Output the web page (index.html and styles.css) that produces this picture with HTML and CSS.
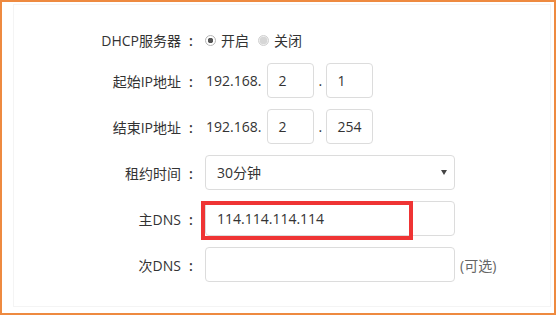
FILE: index.html
```html
<!DOCTYPE html>
<html lang="zh-CN">
<head>
    <meta charset="UTF-8">
    <meta name="viewport" content="width=device-width, initial-scale=1.0">
    <title>DHCP</title>
    <link rel="stylesheet" href="styles.css">
</head>
<body>

<section class="frame">
<div class="panel">

<form class="dhcp-form">

    <div class="row row-radio">
        <label class="label">DHCP服务器<span class="colon">:</span></label>
        <div class="field">
            <label class="radio"><input type="radio" name="dhcp" checked> 开启</label>
            <label class="radio"><input type="radio" name="dhcp" class="off"> 关闭</label>
        </div>
    </div>

    <div class="row">
        <label class="label">起始IP地址<span class="colon">:</span></label>
        <div class="field">
            <span class="prefix">192.168.</span>
            <input class="octet" type="text" value="2">
            <span class="dot">.</span>
            <input class="octet" type="text" value="1">
        </div>
    </div>

    <div class="row">
        <label class="label">结束IP地址<span class="colon">:</span></label>
        <div class="field">
            <span class="prefix">192.168.</span>
            <input class="octet" type="text" value="2">
            <span class="dot">.</span>
            <input class="octet" type="text" value="254">
        </div>
    </div>

    <div class="row">
        <label class="label">租约时间<span class="colon">:</span></label>
        <div class="field">
            <div class="select-wrap">
                <select class="select">
                    <option>30分钟</option>
                    <option>1小时</option>
                    <option>2小时</option>
                </select>
            </div>
        </div>
    </div>

    <div class="row">
        <label class="label">主DNS<span class="colon">:</span></label>
        <div class="field">
            <div class="highlight-wrap">
                <input class="text-input" type="text" value="114.114.114.114">
                <div class="highlight"></div>
            </div>
        </div>
    </div>

    <div class="row">
        <label class="label">次DNS<span class="colon">:</span></label>
        <div class="field">
            <input class="text-input" type="text" value="">
            <span class="hint">(可选)</span>
        </div>
    </div>

</form>

</div>
</section>

</body>
</html>
```

FILE: styles.css
```css
*{
    box-sizing: border-box;
}

html, body{
    margin: 0;
    padding: 0;
    background: #fff;
}

body{
    font-family: "Open Sans", "Noto Sans CJK SC", sans-serif;
    font-size: 14px;
    color: #333;
}

.frame{
    width: 556px;
    height: 315px;
    border: 2px solid #ee8a40;
    padding: 2px 3px 6px 11px;
}

.panel{
    height: 100%;
    border: 1px solid #f4f4f4;
}

.dhcp-form{
    display: flex;
    flex-direction: column;
    padding-top: 17px;
    padding-left: 76px;
}

.row{
    display: flex;
    align-items: center;
    height: 35px;
    margin-bottom: 11px;
}

.row-radio{
    height: 36px;
    margin-bottom: 5px;
}

.label{
    width: 111px;
    text-align: right;
    margin-right: 4px;
    white-space: nowrap;
}

/* centred colon in a wide cell */
.colon{
    display: inline-block;
    width: 20px;
    text-align: center;
    font-weight: 600;
}

.field{
    display: flex;
    align-items: center;
    height: 100%;
}

/* radios */
.radio{
    display: flex;
    align-items: center;
    margin-right: 9px;
}

.radio input{
    appearance: none;
    -webkit-appearance: none;
    width: 11px;
    height: 11px;
    margin: 0 5px 0 0;
    border-radius: 50%;
    border: 1px solid #b5b5b5;
    background: radial-gradient(circle, #555 0, #555 2.5px, #fff 3px);
}

.radio input.off{
    border-color: #d0d0d0;
    background: radial-gradient(circle, #d6d6d6 0, #d6d6d6 3.5px, #ededed 4px);
}

/* ip octets */
.prefix{
    margin-left: 1px;
    margin-right: 6px;
}

.octet{
    width: 47px;
    height: 35px;
    border: 1px solid #dcdcdc;
    border-radius: 4px;
    padding: 0 0 0 10px;
    font: inherit;
    color: #333;
    outline: none;
}

.dot{
    width: 12px;
    text-align: center;
}

/* select */
.select-wrap{
    position: relative;
    width: 250px;
    height: 35px;
}

.select-wrap::after{
    content: '';
    position: absolute;
    right: 8px;
    top: 15px;
    border-left: 3px solid transparent;
    border-right: 3px solid transparent;
    border-top: 5px solid #444;
}

.select{
    appearance: none;
    -webkit-appearance: none;
    width: 100%;
    height: 100%;
    border: 1px solid #dcdcdc;
    border-radius: 4px;
    background: #fff;
    padding: 0 0 0 11px;
    font: inherit;
    color: #333;
    outline: none;
}

/* text inputs */
.text-input{
    width: 250px;
    height: 35px;
    border: 1px solid #dcdcdc;
    border-radius: 4px;
    padding: 0 0 0 11px;
    font: inherit;
    color: #333;
    outline: none;
}

.highlight-wrap{
    position: relative;
    height: 35px;
}

.highlight{
    position: absolute;
    left: -4px;
    top: 0;
    width: 212px;
    height: 39px;
    border: 4px solid #ef3434;
}

.hint{
    margin-left: 5px;
    color: #666;
}
```
